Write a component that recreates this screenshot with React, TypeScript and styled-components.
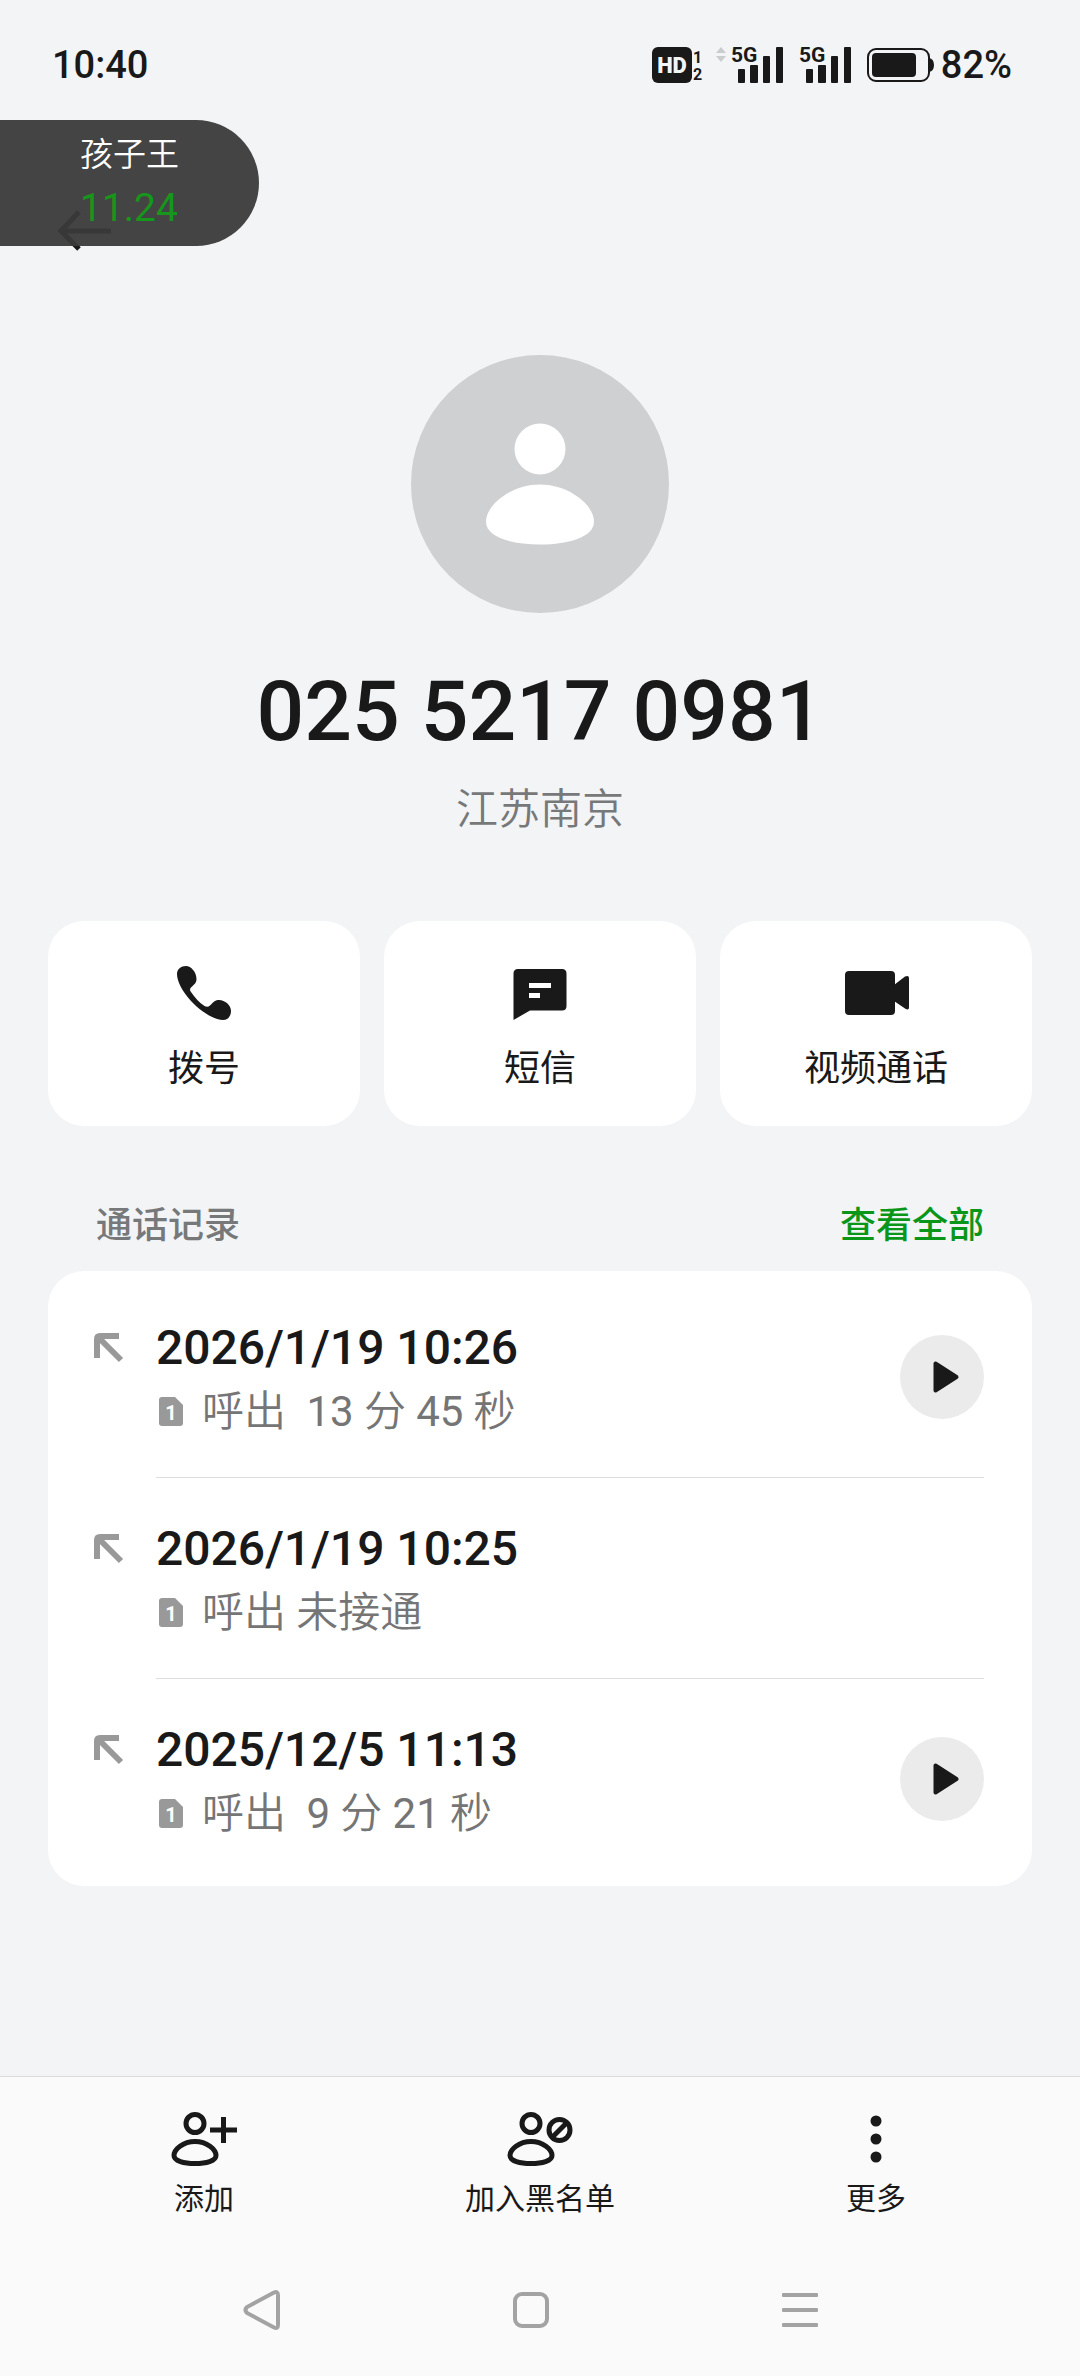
import React from "react";
import styled, { createGlobalStyle } from "styled-components";

const ink = "#191919";
const muted = "#777879";
const green = "#0a9619";

const GlobalStyle = createGlobalStyle`
  *, *::before, *::after { box-sizing: border-box; }
  body {
    margin: 0;
    background: #f2f4f6;
    color: ${ink};
    font-family: Roboto, "Noto Sans CJK SC", sans-serif;
  }
  h1, h2, p, ul { margin: 0; padding: 0; font-weight: inherit; }
  ul { list-style: none; }
  button {
    border: 0;
    padding: 0;
    background: none;
    color: inherit;
    font: inherit;
    cursor: pointer;
  }
  svg { display: block; flex: none; }
`;

const Page = styled.div`
  position: relative;
  display: flex;
  flex-direction: column;
  min-height: 100vh;
`;

const StatusBar = styled.div`
  display: flex;
  align-items: center;
  justify-content: space-between;
  height: 130px;
  padding: 0 68px 0 52px;
  font-size: 38px;
  font-weight: 500;
`;

const StatusIcons = styled.div`
  display: flex;
  align-items: center;
  gap: 12px;
`;

const Battery = styled.div`
  display: flex;
  align-items: center;
  gap: 6px;
`;

const FloatingTag = styled.aside`
  position: absolute;
  top: 120px;
  left: 0;
  padding: 8px 80px 12px;
  border-radius: 0 63px 63px 0;
  background: rgba(58, 58, 58, 0.95);
  color: #fff;
`;

const TagName = styled.p`
  font-size: 33px;
  font-weight: 350;
  line-height: 54px;
`;

const TagValue = styled.p`
  color: #16961b;
  font-size: 39px;
  line-height: 52px;
`;

const Header = styled.header`
  padding: 48px 36px;
`;

const BackButton = styled.button`
  display: grid;
  place-items: center;
  width: 96px;
  height: 106px;
`;

const Profile = styled.section`
  display: flex;
  flex-direction: column;
  align-items: center;
  padding: 23px 48px 81px;
`;

const PhoneNumber = styled.h1`
  margin: 49px 0 18px;
  font-size: 84px;
  font-weight: 500;
  line-height: 100px;
`;

const Place = styled.p`
  color: ${muted};
  font-size: 42px;
  font-weight: 350;
  line-height: 60px;
`;

const Actions = styled.div`
  display: grid;
  grid-template-columns: repeat(3, 1fr);
  gap: 24px;
  padding: 0 48px;
`;

const ActionCard = styled.button`
  display: flex;
  flex-direction: column;
  align-items: center;
  gap: 25px;
  padding: 45px 0 33px;
  border-radius: 36px;
  background: #fff;
  font-size: 36px;
  line-height: 48px;
`;

const SectionHead = styled.div`
  display: flex;
  justify-content: space-between;
  padding: 76px 96px 21px;
  font-size: 36px;
  font-weight: 500;
  line-height: 48px;
`;

const SectionTitle = styled.h2`
  color: ${muted};
  font-size: 36px;
`;

const AllLink = styled.a`
  color: ${green};
  text-decoration: none;
`;

const CallList = styled.ul`
  margin: 0 48px 48px;
  padding: 6px 0;
  border-radius: 36px;
  background: #fff;
`;

const CallRow = styled.li`
  display: flex;
  gap: 30px;
  padding: 0 48px 0 44px;

  > svg { margin-top: 54px; }
`;

const CallBody = styled.div`
  display: flex;
  flex: 1;
  align-items: center;
  justify-content: space-between;
  border-bottom: 1px solid #dedede;

  ${CallRow}:last-child & { border-color: transparent; }
`;

const CallText = styled.div`
  padding: 39px 0 33px;
`;

const CallDate = styled.p`
  font-size: 48px;
  font-weight: 500;
  line-height: 64px;
`;

const CallDetail = styled.div`
  display: flex;
  align-items: center;
  gap: 16px;
  color: #757575;
  font-size: 42px;
  font-weight: 350;
  line-height: 64px;
  white-space: pre;
`;

const Figure = styled.span`
  font-weight: 400;
`;

const PlayButton = styled.button`
  display: grid;
  place-items: center;
  width: 84px;
  height: 84px;
  border-radius: 50%;
  background: #ebebeb;
`;

const Footer = styled.footer`
  margin-top: auto;
  border-top: 1px solid #dadada;
  background: #fafafa;
`;

const Toolbar = styled.div`
  display: grid;
  grid-template-columns: repeat(3, 1fr);
  padding: 35px 36px 27px;
`;

const Tool = styled.button`
  display: flex;
  flex-direction: column;
  align-items: center;
  gap: 15px;
  font-size: 30px;
  line-height: 36px;
`;

const SystemNav = styled.nav`
  display: grid;
  grid-template-columns: repeat(3, 1fr);
  height: 132px;
  padding: 0 146px 0 128px;
`;

const NavButton = styled.button`
  display: grid;
  place-items: center;
`;

const HdIcon = () => (
  <svg width="52" height="50" viewBox="0 -6 52 50" fill={ink} fontFamily="Roboto, sans-serif">
    <rect x="1" y="1" width="40" height="36" rx="6" />
    <text x="21" y="27" textAnchor="middle" fontSize="22" fontWeight="900" fill="#f2f4f6">HD</text>
    <text x="42" y="17" fontSize="16" fontWeight="700">1</text>
    <text x="42" y="34" fontSize="16" fontWeight="700">2</text>
  </svg>
);

const SignalIcon = ({ data }: { data?: boolean }) => (
  <svg
    width={data ? 72 : 56}
    height="50"
    viewBox={data ? "-16 -6 72 50" : "0 -6 56 50"}
    fill={ink}
    fontFamily="Roboto, sans-serif"
  >
    {data && <path d="M-15 7l5-6 5 6zM-15 10l5 6 5-6z" fill="#cbcccd" />}
    <text x="0" y="16" fontSize="21" fontWeight="700">5G</text>
    <rect x="7" y="23" width="7" height="14" rx="1" />
    <rect x="19" y="19" width="8" height="18" rx="1" />
    <rect x="32" y="10" width="7" height="27" rx="1" />
    <rect x="45" y="1" width="7" height="36" rx="1" />
  </svg>
);

const BatteryIcon = () => (
  <svg width="68" height="38" viewBox="0 0 68 38">
    <rect x="1" y="3" width="61" height="32" rx="8" fill="none" stroke={ink} strokeWidth="2" />
    <rect x="5" y="7" width="44" height="24" rx="4" fill={ink} />
    <path d="M62 12q5 1 5 7t-5 7z" fill={ink} />
  </svg>
);

const BackIcon = () => (
  <svg width="54" height="42" viewBox="0 0 54 42" fill="none" stroke={ink} strokeWidth="5">
    <path d="M22 2L4 21l18 18M4 21h50" />
  </svg>
);

const Avatar = () => (
  <svg width="258" height="258" viewBox="0 0 258 258" fill="#fff" role="img" aria-label="联系人头像">
    <circle cx="129" cy="129" r="129" fill="#cfd0d2" />
    <circle cx="129" cy="94" r="25.5" />
    <path d="M129 129.500C158 129.500 183 150 183 166.500C183 182 158 189.500 129 189.500S75 182 75 166.500C75 150 100 129.500 129 129.500Z" />
  </svg>
);

const DialIcon = () => (
  <svg width="54" height="54" viewBox="0 0 54 54" fill={ink}>
    <path d="M0 8C0 3 4 0 9 0C14 0 19.500 6 19.500 13C19.500 17 17 18.500 14 21.500C12.500 23 13 25 14 26C18 32 23 37 27.500 40C29.500 41 31.500 41 33 39.500C36 36.500 37.500 34 42 34C48 34 54 39 54 45C54 50 51 54 46 54C38 54 24 46 14 35C5 25 0 15 0 8Z" />
  </svg>
);

const MessageIcon = () => (
  <svg width="54" height="54" viewBox="0 0 54 54" fill={ink}>
    <path d="M5 3H49Q53.500 3 53.500 7.500V40Q53.500 44.500 49 44.500H17L.5 54V7.500Q.5 3 5 3Z" />
    <path d="M16 17h22v5H16zM16 27h11v5H16z" fill="#fff" />
  </svg>
);

const VideoIcon = () => (
  <svg width="66" height="54" viewBox="0 0 66 54" fill={ink}>
    <rect x="2" y="5" width="50" height="44" rx="4" />
    <path d="M51 19L62 10.500Q66 9 66 12V41.500Q66 45 62 42.500L51 35Z" />
  </svg>
);

const OutgoingIcon = () => (
  <svg width="34" height="34" viewBox="0 0 34 34" fill="none" stroke="#999" strokeWidth="6">
    <path d="M5 27V8Q5 5 8 5H27M6 6L29 29" />
  </svg>
);

const SimIcon = () => (
  <svg width="30" height="30" viewBox="0 0 30 30">
    <path d="M6 0H19L27 8V26Q27 29 24 29H6Q3 29 3 26V3Q3 0 6 0Z" fill="#999" />
    <text x="15" y="23" textAnchor="middle" fontFamily="Roboto, sans-serif" fontSize="20" fontWeight="700" fill="#fff">1</text>
  </svg>
);

const PlayIcon = () => (
  <svg width="36" height="36" viewBox="0 0 36 36" fill={ink} stroke={ink} strokeWidth="4" strokeLinejoin="round">
    <path d="M11.500 4.500V31.500L32.500 18Z" />
  </svg>
);

const PersonIcon = ({ children }: { children: React.ReactNode }) => (
  <svg width="66" height="54" viewBox="0 0 66 54" fill="none" stroke={ink} strokeWidth="5">
    <circle cx="24" cy="11.500" r="9" />
    <path d="M24 29.500C36 29.500 45 37.500 45 43.500C45 49 35 51.500 24 51.500S3 49 3 43.500C3 37.500 12 29.500 24 29.500Z" />
    {children}
  </svg>
);

const MoreIcon = () => (
  <svg width="66" height="54" viewBox="0 0 66 54" fill={ink}>
    <circle cx="33" cy="9" r="5.500" />
    <circle cx="33" cy="27" r="5.500" />
    <circle cx="33" cy="45" r="5.500" />
  </svg>
);

const calls = [
  { date: "2026/1/19 10:26", duration: [13, 45] },
  { date: "2026/1/19 10:25", duration: null },
  { date: "2025/12/5 11:13", duration: [9, 21] },
];

export default function App() {
  return (
    <Page lang="zh-CN">
      <GlobalStyle />
      <StatusBar>
        <span>10:40</span>
        <StatusIcons>
          <HdIcon />
          <SignalIcon data />
          <SignalIcon />
          <Battery><BatteryIcon />82%</Battery>
        </StatusIcons>
      </StatusBar>

      <Header>
        <BackButton aria-label="返回"><BackIcon /></BackButton>
      </Header>

      <main>
        <Profile>
          <Avatar />
          <PhoneNumber>025 5217 0981</PhoneNumber>
          <Place>江苏南京</Place>
        </Profile>

        <Actions>
          <ActionCard><DialIcon />拨号</ActionCard>
          <ActionCard><MessageIcon />短信</ActionCard>
          <ActionCard><VideoIcon />视频通话</ActionCard>
        </Actions>

        <SectionHead>
          <SectionTitle>通话记录</SectionTitle>
          <AllLink href="#all">查看全部</AllLink>
        </SectionHead>

        <CallList>
          {calls.map(({ date, duration }) => (
            <CallRow key={date}>
              <OutgoingIcon />
              <CallBody>
                <CallText>
                  <CallDate>{date}</CallDate>
                  <CallDetail>
                    <SimIcon />
                    {duration ? (
                      <p>
                        {"呼出  "}
                        <Figure>{duration[0]}</Figure>
                        {" 分 "}
                        <Figure>{duration[1]}</Figure>
                        {" 秒"}
                      </p>
                    ) : (
                      <p>呼出 未接通</p>
                    )}
                  </CallDetail>
                </CallText>
                {duration && (
                  <PlayButton aria-label="播放录音"><PlayIcon /></PlayButton>
                )}
              </CallBody>
            </CallRow>
          ))}
        </CallList>
      </main>

      <Footer>
        <Toolbar>
          <Tool>
            <PersonIcon><path d="M39 18h27M52.500 5v26" /></PersonIcon>
            添加
          </Tool>
          <Tool>
            <PersonIcon>
              <circle cx="52.500" cy="18" r="10.500" />
              <path d="M45 25.500L60 10.500" />
            </PersonIcon>
            加入黑名单
          </Tool>
          <Tool><MoreIcon />更多</Tool>
        </Toolbar>
        <SystemNav>
          <NavButton aria-label="返回">
            <svg width="38" height="42" viewBox="0 0 38 42" fill="none" stroke="#a3a3a3" strokeWidth="4">
              <path d="M31 3.500L4 18Q1 21 4 24L31 38.500Q35 40 35 36V6Q35 2 31 3.500Z" />
            </svg>
          </NavButton>
          <NavButton aria-label="主屏幕">
            <svg width="38" height="38" viewBox="0 0 38 38" fill="none" stroke="#a3a3a3" strokeWidth="4">
              <rect x="3" y="3" width="32" height="32" rx="7" />
            </svg>
          </NavButton>
          <NavButton aria-label="最近任务">
            <svg width="36" height="36" viewBox="0 0 36 36" fill="#a3a3a3">
              <rect y="1" width="36" height="4" rx="1" />
              <rect y="16" width="36" height="4" rx="1" />
              <rect y="31" width="36" height="4" rx="1" />
            </svg>
          </NavButton>
        </SystemNav>
      </Footer>

      <FloatingTag>
        <TagName>孩子王</TagName>
        <TagValue>11.24</TagValue>
      </FloatingTag>
    </Page>
  );
}
